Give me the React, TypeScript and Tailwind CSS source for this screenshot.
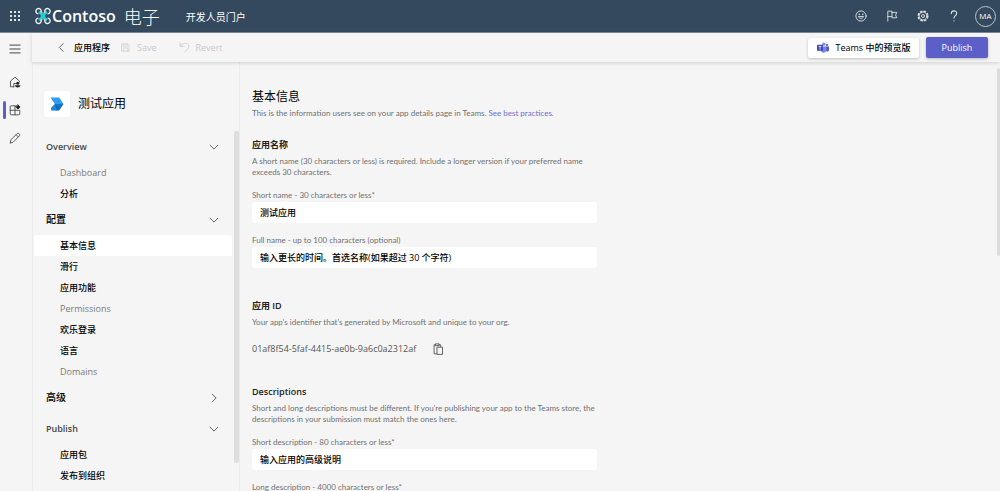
import type { ReactNode } from "react";

type NavGroup = { title: string; cjk?: boolean; open: boolean; items: { label: string; cjk?: boolean; active?: boolean }[] };

const groups: NavGroup[] = [
  { title: "Overview", open: true, items: [{ label: "Dashboard" }, { label: "分析", cjk: true }] },
  {
    title: "配置",
    cjk: true,
    open: true,
    items: [
      { label: "基本信息", cjk: true, active: true },
      { label: "滑行", cjk: true },
      { label: "应用功能", cjk: true },
      { label: "Permissions" },
      { label: "欢乐登录", cjk: true },
      { label: "语言", cjk: true },
      { label: "Domains" },
    ],
  },
  { title: "高级", cjk: true, open: false, items: [] },
  { title: "Publish", open: true, items: [{ label: "应用包", cjk: true }, { label: "发布到组织", cjk: true }] },
];

function Icon({ className = "", children, box = 20 }: { className?: string; children: ReactNode; box?: number }) {
  return (
    <svg
      viewBox={`0 0 ${box} ${box}`}
      className={`shrink-0 ${className}`}
      fill="none"
      stroke="currentColor"
      strokeWidth="1.5"
      strokeLinecap="round"
      strokeLinejoin="round"
      aria-hidden="true"
    >
      {children}
    </svg>
  );
}

function Chevron({ open }: { open: boolean }) {
  return (
    <Icon className="size-3 text-[#555]">
      {open ? <path d="M3.500 7l6.500 6.500L16.500 7" /> : <path d="M7 3.500l6.500 6.500L7 16.500" />}
    </Icon>
  );
}

function Header() {
  const iconButton = "flex size-5 items-center justify-center";
  return (
    <header className="flex h-[33px] shrink-0 items-center border-b border-[#7e8a96] bg-[#34495e] pl-[7px] pr-1 text-white">
      <button type="button" aria-label="App launcher" className="flex size-4 items-center justify-center text-[#dfe4e8]">
        <svg viewBox="0 0 12 12" className="size-3" fill="currentColor">
          {[1, 5, 9].map((y) => [1, 5, 9].map((x) => <rect key={`${x}-${y}`} x={x} y={y} width="2" height="2" />))}
        </svg>
      </button>
      <svg viewBox="0 0 30 32" className="ml-3 h-[18px] w-4 shrink-0" fill="none" aria-hidden="true">
        <path d="M8 8L22 24M22 8L8 24" stroke="#30c5c9" strokeWidth="5" />
        <path d="M10 9h10l-1 7 1 7H10l1-7z" fill="#30c5c9" />
        <g stroke="#e8f4f6" strokeWidth="2.600">
          <path d="M11 9.500A5 5 0 1 0 6.500 12" />
          <path d="M19 9.500A5 5 0 1 1 23.500 12" />
          <path d="M11 22.500A5 5 0 1 1 6.500 20" />
          <path d="M19 22.500A5 5 0 1 0 23.500 20" />
        </g>
      </svg>
      <span className="ml-px whitespace-nowrap text-base font-semibold">Contoso</span>
      <span className="ml-2 whitespace-nowrap font-['Noto_Sans_CJK_SC',sans-serif] text-lg font-light">电子</span>
      <span className="ml-[26px] whitespace-nowrap font-['Noto_Sans_CJK_SC',sans-serif] text-[10px]">开发人员门户</span>
      <div className="ml-auto flex items-center gap-[11px] text-[#dfe4e8]">
        <button type="button" aria-label="Feedback" className={iconButton}>
          <Icon className="size-3">
            <circle cx="10" cy="10" r="8.500" />
            <path d="M6 11.500c1 3.500 7 3.500 8 0z" />
            <path d="M7 7v.500M13 7v.500" strokeWidth="2.200" />
          </Icon>
        </button>
        <button type="button" aria-label="Flag" className={iconButton}>
          <Icon className="size-3">
            <path d="M3 18.500V2h7v9H3M10 4h8l-2 4.500 2 4.500h-8v-2" />
          </Icon>
        </button>
        <button type="button" aria-label="Settings" className={iconButton}>
          <Icon className="size-3">
            <circle cx="10" cy="10" r="8" strokeWidth="2.400" strokeDasharray="4.200 2.080" strokeLinecap="butt" />
            <circle cx="10" cy="10" r="6.600" />
            <circle cx="10" cy="10" r="2.600" />
          </Icon>
        </button>
        <button type="button" aria-label="Help" className={iconButton}>
          <Icon className="size-3">
            <path d="M5.500 6c0-6 9-6 9-.500 0 4-4.500 3.800-4.500 8" strokeWidth="1.800" />
            <circle cx="10" cy="18" r="1" fill="currentColor" stroke="none" />
          </Icon>
        </button>
        <button
          type="button"
          aria-label="Account"
          className="flex size-[21px] items-center justify-center rounded-full border border-[#b9c6cf] text-[8px] font-medium text-white"
        >
          MA
        </button>
      </div>
    </header>
  );
}

function Rail() {
  return (
    <nav aria-label="Main" className="flex w-8 shrink-0 flex-col text-[#4a4a4a]">
      <button type="button" aria-label="Menu" className="flex h-[31px] items-center justify-center pr-0.5 text-[#333]">
        <Icon className="size-3">
          <path d="M1.500 3.500h17M1.500 10h17M1.500 16.500h17" />
        </Icon>
      </button>
      <a href="#home" aria-label="Home" className="mt-1 flex h-7 items-center justify-center pr-0.5">
        <Icon className="size-3">
          <path d="M8 18H2.500V8.500L10 2l7.500 6.500V10M8 18v-5.500h3" />
          <circle cx="14.500" cy="12" r="2.600" fill="#222" stroke="none" />
          <path d="M10 15.500h9c0 5-9 5-9 0z" fill="#222" stroke="none" />
        </Icon>
      </a>
      <a href="#apps" aria-label="Apps" aria-current="page" className="flex h-7 items-center pl-[3px]">
        <span className="h-[18px] w-[3px] rounded-full bg-[#5b5fc7]" />
        <Icon className="ml-[3px] size-3">
          <path d="M10 3H3.500A1.500 1.500 0 0 0 2 4.500V16.500A1.500 1.500 0 0 0 3.500 18H16.500A1.500 1.500 0 0 0 18 16.500V10.500H2M10 3v15" />
          <path d="M15 1.500l3.500 3.500L15 8.500 11.500 5z" fill="#222" stroke="#222" />
        </Icon>
      </a>
      <a href="#tools" aria-label="Tools" className="flex h-7 items-center justify-center pr-0.5">
        <Icon className="size-3">
          <path d="M2 18l1.200-5L13.500 2.700c2.200-2.200 6 1.600 3.800 3.800L7 16.800zM12 4.500L15.500 8" />
        </Icon>
      </a>
    </nav>
  );
}

function Toolbar() {
  return (
    <div className="z-10 flex h-[29px] shrink-0 items-center bg-[#f5f5f5] pl-6 pr-3 shadow-[0_1px_4px_rgba(0,0,0,0.16)]">
      <button type="button" className="flex items-center gap-[7px] whitespace-nowrap text-[9px] font-medium text-black">
        <Icon className="size-[11px] text-[#444]">
          <path d="M13 3l-7 7 7 7" />
        </Icon>
        应用程序
      </button>
      <button type="button" disabled className="ml-[11px] flex items-center gap-[7px] text-[9px] text-[#c9c9c9]">
        <Icon className="size-[9px]">
          <path d="M2 2h13l3 3v13H2zM6 2v5h8V2M5 18v-7h10v7" />
        </Icon>
        Save
      </button>
      <button type="button" disabled className="ml-[22px] flex items-center gap-[6px] text-[9px] text-[#c9c9c9]">
        <Icon className="size-[11px]">
          <path d="M2 1.500V8h7M2 8C6 1 14 1 17 5c3 5-2 8-7 13.500" />
        </Icon>
        Revert
      </button>
      <div className="ml-auto flex items-center gap-[7px]">
        <button
          type="button"
          className="flex h-5 w-[111px] items-center justify-center gap-[7px] whitespace-nowrap rounded-[2px] bg-white text-[9px] font-medium text-black shadow-[0_1px_3px_rgba(0,0,0,0.22)]"
        >
          <svg viewBox="0 0 22 20" className="h-[11px] w-3 shrink-0" aria-hidden="true">
            <circle cx="18.500" cy="5.500" r="2" fill="#5059c9" />
            <circle cx="12.500" cy="4" r="3" fill="#7b83eb" />
            <path d="M15 8h7v6c0 3-3 4-5 3z" fill="#5059c9" />
            <path d="M7 8h10v7c0 6-10 6-10 0z" fill="#7b83eb" />
            <rect y="5" width="11" height="11" rx="1" fill="#4048b5" />
            <path d="M3 8h5M5.500 8v6" stroke="#fff" strokeWidth="1.400" />
          </svg>
          Teams 中的预览版
        </button>
        <button
          type="button"
          className="h-[21px] w-[62px] rounded-[2px] bg-[#5b5fc7] text-[9px] text-white shadow-[0_1px_3px_rgba(0,0,0,0.25)]"
        >
          Publish
        </button>
      </div>
    </div>
  );
}

function Sidebar() {
  return (
    <aside className="flex w-[208px] shrink-0 flex-col border-x border-[#ececec]">
      <div className="flex h-[69px] shrink-0 items-center gap-2 pl-[11px] pt-[14px]">
        <span className="flex size-[26px] items-center justify-center rounded-[3px] bg-white">
          <svg viewBox="0 0 26 26" className="size-[14px]" aria-hidden="true">
            <path d="M1 1h16l8 12H9z" fill="#2b9df4" />
            <path d="M9 13h16l-8 12H10z" fill="#1267b4" />
            <path d="M9 13L2 20v5h11z" fill="#1d86dd" />
            <path d="M9 13h16l-9 6z" fill="#1476cc" />
          </svg>
        </span>
        <span className="text-xs text-black">测试应用</span>
      </div>
      <div className="flex min-h-0 flex-1">
        <nav aria-label="App settings" className="min-w-0 flex-1 pl-px pr-0.5">
          {groups.map((group) => (
            <section key={group.title}>
              <button
                type="button"
                aria-expanded={group.open}
                className="flex h-[31px] w-full items-center justify-between pl-3 pr-3"
              >
                <span className={group.cjk ? "text-[10px] font-medium text-black" : "text-[9px] font-semibold text-[#484848]"}>
                  {group.title}
                </span>
                <Chevron open={group.open} />
              </button>
              <ul>
                {group.items.map((item) => (
                  <li key={item.label}>
                    <a
                      href="#section"
                      aria-current={item.active ? "true" : undefined}
                      className={`flex h-[21px] items-center rounded-[2px] pl-[26px] text-[9px] ${item.active ? "bg-white" : ""} ${item.cjk ? "font-medium text-black" : "text-[#7a7a7a]"}`}
                    >
                      {item.label}
                    </a>
                  </li>
                ))}
              </ul>
            </section>
          ))}
        </nav>
        <div className="h-[332px] w-[5px] shrink-0 rounded-full bg-[#dedede]" />
      </div>
    </aside>
  );
}

function Field({ id, label, value }: { id: string; label: string; value: string }) {
  return (
    <div className="mb-3">
      <label htmlFor={id} className="block h-3 font-['Lato',sans-serif] text-[8px] leading-[10px] text-[#707070]">
        {label}
      </label>
      <input
        id={id}
        defaultValue={value}
        className="block h-[21px] w-full rounded-[3px] bg-white px-2 text-[9px] font-medium text-black outline-none"
      />
    </div>
  );
}

function Details() {
  const h3 = "h-4 text-[9px] font-semibold leading-4 text-[#222]";
  const note = "mt-[3px] font-['Lato',sans-serif] text-[8px] leading-[11px] text-[#707070]";
  return (
    <main className="min-w-0 flex-1 overflow-hidden pl-3 pt-[26px]">
      <div className="w-[345px]">
        <h2 className="h-[17px] text-xs leading-[17px] text-black">基本信息</h2>
        <p className={note}>
          This is the information users see on your app details page in Teams.{" "}
          <a href="#practices" className="text-[#6b6fd0]">
            See best practices.
          </a>
        </p>
        <section className="mt-[18px]">
          <h3 className={h3}>应用名称</h3>
          <p className={`${note} mb-3`}>
            A short name (30 characters or less) is required. Include a longer version if your preferred name
            <br />
            exceeds 30 characters.
          </p>
          <Field id="short-name" label="Short name - 30 characters or less*" value="测试应用" />
          <Field id="full-name" label="Full name - up to 100 characters (optional)" value="输入更长的时间。首选名称(如果超过 30 个字符)" />
        </section>
        <section className="mt-[30px]">
          <h3 className={h3}>应用 ID</h3>
          <p className={note}>Your app's identifier that's generated by Microsoft and unique to your org.</p>
          <div className="mt-[11px] flex h-5 items-center gap-4 text-[9px] text-[#555]">
            <span>01af8f54-5faf-4415-ae0b-9a6c0a2312af</span>
            <button type="button" aria-label="Copy app ID">
              <Icon className="size-3">
                <path d="M6 3H3.500v15H8M6 1.500h6v3H6zM12 3h2.500v3M9 7h8.500v12H9z" />
              </Icon>
            </button>
          </div>
        </section>
        <section className="mt-[25px]">
          <h3 className={h3}>Descriptions</h3>
          <p className={`${note} mb-3`}>
            Short and long descriptions must be different. If you're publishing your app to the Teams store, the
            <br />
            descriptions in your submission must match the ones here.
          </p>
          <Field id="short-description" label="Short description - 80 characters or less*" value="输入应用的高级说明" />
          <Field id="long-description" label="Long description - 4000 characters or less*" value="" />
        </section>
      </div>
    </main>
  );
}

export default function App() {
  return (
    <div className="flex h-screen flex-col overflow-hidden bg-[#f5f5f5] font-['Open_Sans','Noto_Sans_CJK_SC',sans-serif]">
      <Header />
      <div className="flex min-h-0 flex-1">
        <Rail />
        <div className="flex min-w-0 flex-1 flex-col">
          <Toolbar />
          <div className="flex min-h-0 flex-1">
            <Sidebar />
            <Details />
            <div className="mt-1.5 h-[188px] w-[3px] shrink-0 rounded-full bg-[#dcdcdc]" />
          </div>
        </div>
      </div>
    </div>
  );
}
